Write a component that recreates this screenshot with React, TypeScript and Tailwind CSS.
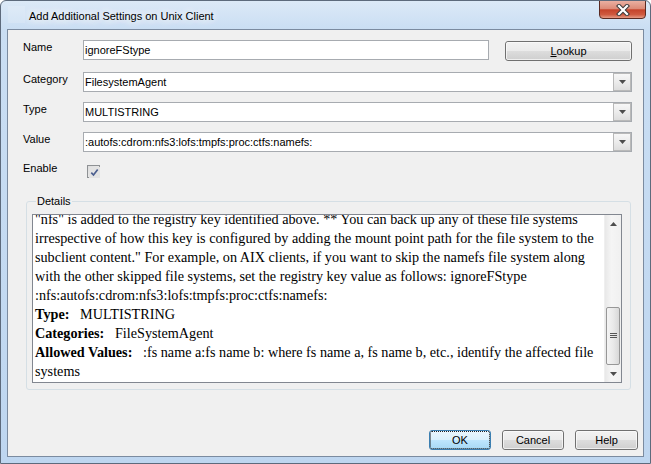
import React from "react";

const UI = { fontFamily: '"Liberation Sans", Arial, sans-serif' };
const SERIF = { fontFamily: '"Liberation Serif", "Times New Roman", serif' };

function Arrow({ up = false }: { up?: boolean }) {
  return (
    <svg width="7" height="4" viewBox="0 0 7 4">
      {up ? <path d="M0 4 L7 4 L3.5 0 Z" fill="#4d4d4d" /> : <path d="M0 0 L7 0 L3.5 4 Z" fill="#4d4d4d" />}
    </svg>
  );
}

function Combo({ value }: { value: string }) {
  return (
    <div className="flex h-[20px] w-[549px] border border-[#a7abb0] bg-white">
      <div className="flex-1 pl-[1px] text-[11px] leading-[18px] text-black whitespace-nowrap overflow-hidden">
        {value}
      </div>
      <div className="w-[18px] h-[18px] border border-[#b9b9b9] bg-[linear-gradient(180deg,#f7f7f7_0%,#ececec_50%,#dedede_100%)] flex items-center justify-center">
        <Arrow />
      </div>
    </div>
  );
}

function Row({ label, children, h = "h-[20px]" }: { label: string; children: React.ReactNode; h?: string }) {
  return (
    <div className={`flex items-start ${h}`}>
      <div className="w-[60px] text-[11px] leading-[14px] text-black">{label}</div>
      {children}
    </div>
  );
}

function WinButton({ children, w, primary = false }: { children: React.ReactNode; w: string; primary?: boolean }) {
  return (
    <div
      className={`${w} h-[20px] rounded-[3px] border flex items-center justify-center text-[11px] text-black ${
        primary
          ? "border-[#3c7fb1] bg-[linear-gradient(180deg,#eaf6fd_0%,#d9f0fc_50%,#bee6fd_51%,#a7d9f5_100%)]"
          : "border-[#707070] bg-[linear-gradient(180deg,#f2f2f2_0%,#ebebeb_50%,#dddddd_51%,#cfcfcf_100%)]"
      }`}
    >
      <div
        className={`w-full h-full rounded-[2px] border ${
          primary ? "border-dotted border-[#222]" : "border-[#fcfcfc]/70"
        } flex items-center justify-center leading-[14px]`}
      >
        {children}
      </div>
    </div>
  );
}

const lines: React.ReactNode[] = [
  <>"nfs" is added to the registry key identified above. ** You can back up any of these file systems</>,
  <>irrespective of how this key is configured by adding the mount point path for the file system to the</>,
  <>subclient content." For example, on AIX clients, if you want to skip the namefs file system along</>,
  <>with the other skipped file systems, set the registry key value as follows: ignoreFStype</>,
  <>:nfs:autofs:cdrom:nfs3:lofs:tmpfs:proc:ctfs:namefs:</>,
  <>
    <b>Type:</b>
    {"\u00a0\u00a0\u00a0"}MULTISTRING
  </>,
  <>
    <b>Categories:</b>
    {"\u00a0\u00a0\u00a0"}FileSystemAgent
  </>,
  <>
    <b>Allowed Values:</b>
    {"\u00a0\u00a0\u00a0"}:fs name a:fs name b: where fs name a, fs name b, etc., identify the affected file
  </>,
  <>systems</>,
];

export default function App() {
  return (
    <div
      style={UI}
      className="w-[651px] h-[464px] flex flex-col border border-[#5d6a7c] rounded-t-[6px] px-[6px] pb-[6px] bg-[linear-gradient(180deg,#dce9f7_0%,#cadef3_28px,#bed6f0_100%)] overflow-hidden"
    >
      {/* Title bar */}
      <div className="h-[28px] flex items-start shrink-0">
        <div className="w-[17px] h-[17px] mt-[5px] ml-[1px] bg-white/15" />
        <div className="ml-[4px] mt-[8px] text-[11px] leading-[15px] text-black whitespace-nowrap [text-shadow:0_0_8px_#fff,0_0_10px_#fff,0_0_14px_#fff]">
          Add Additional Settings on Unix Client
        </div>
        <div className="flex-1" />
        <div className="-mt-[1px] -mr-[2px] w-[47px] h-[19px] rounded-b-[4px] border border-[#5a2a22] bg-[linear-gradient(180deg,#eab0a2_0%,#dc8b78_45%,#c5432b_52%,#cf5a40_80%,#e59a84_100%)] flex items-center justify-center">
          <svg width="14" height="12" viewBox="0 0 14 12">
            <path d="M3 2 L11 10 M11 2 L3 10" stroke="#3b3b3b" strokeWidth="4.2" strokeLinecap="square" />
            <path d="M3 2 L11 10 M11 2 L3 10" stroke="#ffffff" strokeWidth="2.2" strokeLinecap="square" />
          </svg>
        </div>
      </div>

      {/* Client area */}
      <div className="flex-1 flex flex-col border border-[#7b8ba0] bg-[#f0f0f0] pl-[15px] pt-[10px] pb-[6px]">
        <Row label="Name" h="h-[21px]">
          <div className="w-[406px] h-[20px] border border-[#a7abb0] bg-white pl-[1px] text-[11px] leading-[18px] text-black">
            ignoreFStype
          </div>
          <div className="ml-[16px] mt-[1px]">
            <WinButton w="w-[127px]">
              <span>
                <span className="underline underline-offset-[1px]">L</span>ookup
              </span>
            </WinButton>
          </div>
        </Row>
        <div className="mt-[11px]">
          <Row label="Category">
            <Combo value="FilesystemAgent" />
          </Row>
        </div>
        <div className="mt-[10px]">
          <Row label="Type">
            <Combo value="MULTISTRING" />
          </Row>
        </div>
        <div className="mt-[10px]">
          <Row label="Value">
            <Combo value=":autofs:cdrom:nfs3:lofs:tmpfs:proc:ctfs:namefs:" />
          </Row>
        </div>
        <div className="mt-[9px]">
          <Row label="Enable" h="h-[17px]">
            <div className="ml-[4px] mt-[4px] w-[13px] h-[13px] border border-[#8e9194] bg-[linear-gradient(135deg,#dcdcdc_0%,#f2f2f2_100%)] p-[1px]">
              <svg width="11" height="11" viewBox="0 0 11 11">
                <rect x="0" y="0" width="11" height="11" fill="#e3e3e3" />
                <path d="M2.3 5.6 L4.5 8 L8.7 2.6" stroke="#4c5f8f" strokeWidth="1.7" fill="none" />
              </svg>
            </div>
          </Row>
        </div>

        {/* Details group */}
        <fieldset className="mt-[16px] ml-[3px] mr-[12px] border border-[#d5dfe5] rounded-[3px] pl-[5px] pr-[8px] pt-[6px] pb-[6px]">
          <legend className="ml-[4px] px-[1px] text-[11px] leading-[14px] text-black">Details</legend>
          <div className="h-[169px] border border-[#828790] bg-white flex overflow-hidden">
            <div className="flex-1 overflow-hidden pl-[2px]" style={SERIF}>
              <div className="-mt-[5px] text-[14.2px] leading-[19px] text-black">
                {lines.map((l, i) => (
                  <div key={i} className="whitespace-nowrap">
                    {l}
                  </div>
                ))}
              </div>
            </div>
            <div className="w-[17px] h-full flex flex-col bg-[linear-gradient(90deg,#e8e8e8_0%,#f5f5f5_40%,#f0f0f0_100%)] border-l border-[#efefef]">
              <div className="h-[17px] flex items-center justify-center">
                <Arrow up />
              </div>
              <div className="flex-1 flex flex-col">
                <div className="h-[75px]" />
                <div className="h-[58px] mx-[1px] rounded-[2px] border border-[#979797] bg-[linear-gradient(90deg,#f4f4f4_0%,#eaeaea_50%,#d8d8d8_100%)] flex items-center justify-center">
                  <svg width="7" height="6" viewBox="0 0 7 6">
                    <path d="M0 0.5 H7 M0 2.5 H7 M0 4.5 H7" stroke="#555" strokeWidth="1" />
                  </svg>
                </div>
                <div className="flex-1" />
              </div>
              <div className="h-[17px] flex items-center justify-center">
                <Arrow />
              </div>
            </div>
          </div>
        </fieldset>

        <div className="flex-1" />
        <div className="flex justify-end gap-[11px] pr-[5px]">
          <WinButton w="w-[62px]" primary>
            OK
          </WinButton>
          <WinButton w="w-[62px]">Cancel</WinButton>
          <WinButton w="w-[63px]">Help</WinButton>
        </div>
      </div>
    </div>
  );
}
